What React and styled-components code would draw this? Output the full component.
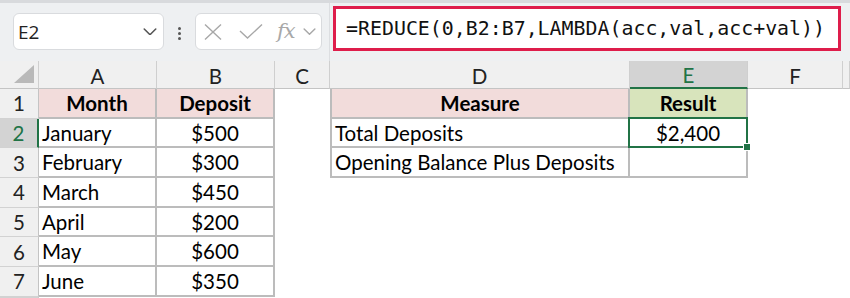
import React from 'react';
import styled, { createGlobalStyle, css } from 'styled-components';

const GREEN = '#217346';
const GRID = '#bcbcbc';

const Global = createGlobalStyle`
  html, body { margin: 0; padding: 0; background: #fff; }
  body { font-family: Lato, "Liberation Sans", sans-serif; }
`;

const Page = styled.div`
  width: 850px;
  height: 298px;
  overflow: hidden;
  display: flex;
  flex-direction: column;
  background: #fff;
`;

const Toolbar = styled.div`
  flex: none;
  height: 61px;
  box-sizing: border-box;
  background: #eef0f2;
  border-top: 3px solid #d8dadd;
  display: flex;
  align-items: flex-start;
  padding-left: 13px;
`;

const NameBox = styled.div`
  margin-top: 10px;
  width: 151px;
  height: 37px;
  box-sizing: border-box;
  background: #fff;
  border: 1px solid #d9dbde;
  border-radius: 6px;
  display: flex;
  align-items: center;
  justify-content: space-between;
  padding: 0 6px 0 4px;
  font-family: "Open Sans", "Liberation Sans", sans-serif;
  font-size: 19px;
  color: #222;
`;

const Dots = styled.div`
  margin: 24px 14px 0 14px;
  display: flex;
  flex-direction: column;
  gap: 2px;
  span {
    width: 3px;
    height: 3px;
    border-radius: 50%;
    background: #555;
    display: block;
  }
`;

const FxBox = styled.div`
  margin-top: 10px;
  width: 127px;
  height: 37px;
  box-sizing: border-box;
  background: #fff;
  border: 1px solid #d9dbde;
  border-radius: 6px;
  display: flex;
  align-items: center;
  padding-left: 8px;
`;

const FormulaArea = styled.div`
  flex: 1;
  align-self: stretch;
  margin-left: 7px;
  border-left: 1px solid #dcdee1;
  display: flex;
  align-items: flex-start;
  padding-left: 3px;
`;

const FormulaBox = styled.div`
  margin-top: 3px;
  width: 508px;
  height: 45px;
  box-sizing: border-box;
  background: #fff;
  border: 3px solid #de1d4b;
  display: flex;
  align-items: center;
  padding-left: 10px;
  font-family: "DejaVu Sans Mono", "Liberation Mono", monospace;
  font-size: 19.9px;
  color: #111;
  white-space: pre;
`;

const Sheet = styled.div`
  flex: 1;
  display: grid;
  grid-template-columns: 39px 118px 118px 55px 300px 118px 95px 1fr;
  grid-template-rows: 28px repeat(7, 29.7px) 1fr;
  font-family: Lato, "Liberation Sans", sans-serif;
  font-size: 20.5px;
  color: #000;
`;

const ColHead = styled.div`
  box-sizing: border-box;
  background: ${p => (p.$sel ? '#d3d3d3' : '#f0f0f0')};
  color: ${p => (p.$sel ? GREEN : '#222')};
  border-right: 1px solid #cfcfcf;
  border-bottom: ${p => (p.$sel ? `2px solid ${GREEN}` : '1px solid #c4c4c4')};
  display: flex;
  align-items: center;
  justify-content: center;
  padding-top: 2px;
`;

const Corner = styled.div`
  box-sizing: border-box;
  background: #f0f0f0;
  border-right: 1px solid #cfcfcf;
  border-bottom: 1px solid #c4c4c4;
  display: flex;
  align-items: flex-end;
  justify-content: flex-end;
  padding: 0 4px 5px 0;
`;

const RowHead = styled.div`
  box-sizing: border-box;
  background: ${p => (p.$sel ? '#d3d3d3' : '#f0f0f0')};
  color: ${p => (p.$sel ? GREEN : '#222')};
  border-right: ${p => (p.$sel ? `2px solid ${GREEN}` : '1px solid #c4c4c4')};
  border-bottom: 1px solid #d2d2d2;
  display: flex;
  align-items: center;
  justify-content: center;
`;

const Cell = styled.div`
  box-sizing: border-box;
  position: relative;
  display: flex;
  align-items: center;
  justify-content: ${p => (p.$center ? 'center' : 'flex-start')};
  padding: 0 3px;
  background: ${p => p.$bg || '#fff'};
  font-weight: ${p => (p.$bold ? 700 : 400)};
  white-space: nowrap;
  z-index: ${p => (p.$active ? 2 : 'auto')};
  ${p =>
    p.$border &&
    css`
      border-right: 2px solid ${GRID};
      border-bottom: 2px solid ${GRID};
    `}
  ${p =>
    p.$left &&
    css`
      border-left: 2px solid ${GRID};
    `}
`;

const Selection = styled.div`
  position: absolute;
  left: -2px;
  top: -2px;
  right: -2px;
  bottom: -2px;
  border: 2px solid ${GREEN};
  pointer-events: none;
  z-index: 3;
`;

const FillHandle = styled.div`
  position: absolute;
  right: -5px;
  bottom: -5px;
  width: 6px;
  height: 6px;
  background: ${GREEN};
  border: 1px solid #fff;
`;

const Chevron = ({ size = 14, color = '#555' }) => (
  <svg width={size} height={size * 0.55} viewBox="0 0 14 8" fill="none">
    <path d="M1 1 L7 7 L13 1" stroke={color} strokeWidth="1.6" strokeLinecap="round" strokeLinejoin="round" />
  </svg>
);

const XIcon = styled.svg`
  margin-right: 17px;
`;
const CheckIcon = styled.svg`
  margin-right: 14px;
`;
const FxText = styled.span`
  font-family: "DejaVu Serif", "Liberation Serif", serif;
  font-style: italic;
  font-size: 21px;
  color: #a8a8a8;
  margin-right: 8px;
  margin-top: -2px;
  letter-spacing: -1px;
`;

const PINK = '#f2dcdb';
const LIME = '#d8e4bc';

const left = [
  ['Month', 'Deposit'],
  ['January', '$500'],
  ['February', '$300'],
  ['March', '$450'],
  ['April', '$200'],
  ['May', '$600'],
  ['June', '$350'],
];
const right = [
  ['Measure', 'Result'],
  ['Total Deposits', '$2,400'],
  ['Opening Balance Plus Deposits', ''],
];

export default function App() {
  const cols = ['A', 'B', 'C', 'D', 'E', 'F', ''];
  return (
    <Page>
      <Global />
      <Toolbar>
        <NameBox>
          <span>E2</span>
          <Chevron size={14} color="#555" />
        </NameBox>
        <Dots>
          <span />
          <span />
          <span />
        </Dots>
        <FxBox>
          <XIcon width="18" height="16" viewBox="0 0 18 16">
            <path d="M1 0.5 L17 15.5 M17 0.5 L1 15.5" stroke="#a8a8a8" strokeWidth="1.4" />
          </XIcon>
          <CheckIcon width="24" height="15" viewBox="0 0 24 15">
            <path d="M1 7 L8.5 14 L23 0.5" stroke="#a8a8a8" strokeWidth="1.4" fill="none" />
          </CheckIcon>
          <FxText>fx</FxText>
          <Chevron size={13} color="#a8a8a8" />
        </FxBox>
        <FormulaArea>
          <FormulaBox>=REDUCE(0,B2:B7,LAMBDA(acc,val,acc+val))</FormulaBox>
        </FormulaArea>
      </Toolbar>
      <Sheet>
        <Corner>
          <svg width="20" height="18" viewBox="0 0 20 18">
            <polygon points="20,0 20,18 0,18" fill="#b9b9b9" />
          </svg>
        </Corner>
        {cols.map((c, i) => (
          <ColHead key={i} $sel={c === 'E'}>
            {c}
          </ColHead>
        ))}
        {left.map((row, r) => {
          const isHead = r === 0;
          const rr = right[r];
          return (
            <React.Fragment key={r}>
              <RowHead $sel={r === 1}>{r + 1}</RowHead>
              <Cell $border $bg={isHead ? PINK : undefined} $bold={isHead} $center={isHead}>
                {row[0]}
              </Cell>
              <Cell $border $bg={isHead ? PINK : undefined} $bold={isHead} $center>
                {row[1]}
              </Cell>
              <Cell />
              {rr ? (
                <>
                  <Cell $border $left $bg={isHead ? PINK : undefined} $bold={isHead} $center={isHead}>
                    {rr[0]}
                  </Cell>
                  <Cell $border $active={r === 1} $bg={isHead ? LIME : undefined} $bold={isHead} $center>
                    {rr[1]}
                    {r === 1 && (
                      <Selection>
                        <FillHandle />
                      </Selection>
                    )}
                  </Cell>
                </>
              ) : (
                <>
                  <Cell />
                  <Cell />
                </>
              )}
              <Cell />
              <Cell />
            </React.Fragment>
          );
        })}
        <RowHead />
      </Sheet>
    </Page>
  );
}
